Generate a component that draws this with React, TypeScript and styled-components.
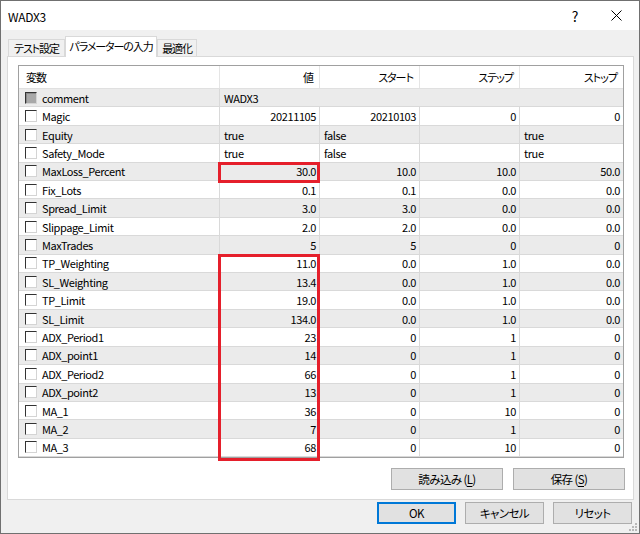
import React from "react";
import styled, { createGlobalStyle } from "styled-components";

const ROW_H = 18.42;
const HEAD_H = 23;

const Global = createGlobalStyle`
  html, body { margin: 0; padding: 0; background: #ffffff; }
  body {
    font-family: "Noto Sans CJK JP", "Noto Sans", sans-serif;
    font-size: 11px;
    letter-spacing: -0.4px;
    color: #000;
    font-feature-settings: "palt";
  }
  * { box-sizing: border-box; }
`;

const Window = styled.div`
  position: relative;
  width: 640px;
  height: 534px;
  border: 1px solid #707070;
  display: flex;
  flex-direction: column;
  background: #f0f0f0;
  overflow: hidden;
`;

const TitleBar = styled.div`
  height: 29px;
  background: #ffffff;
  display: flex;
  align-items: center;
  padding-left: 7px;
`;

const Title = styled.div`
  flex: 1;
  font-size: 12px;
  letter-spacing: -0.3px;
  padding-top: 1px;
`;

const CapButton = styled.div<{ $w: number }>`
  width: ${(p) => p.$w}px;
  height: 29px;
  display: flex;
  align-items: center;
  justify-content: center;
  font-size: 14px;
  letter-spacing: 0;
  color: #000;
`;

const Body = styled.div`
  flex: 1;
  display: flex;
  flex-direction: column;
  padding: 6px 5px 0 6px;
`;

const TabStrip = styled.div`
  display: flex;
  align-items: flex-end;
  height: 21px;
  margin-bottom: -1px;
  padding-left: 1px;
  position: relative;
  z-index: 1;
`;

const Tab = styled.div<{ $active?: boolean; $w: number }>`
  width: ${(p) => p.$w}px;
  height: ${(p) => (p.$active ? 21 : 18)}px;
  border: 1px solid #d9d9d9;
  border-bottom: ${(p) => (p.$active ? "none" : "1px solid #d9d9d9")};
  background: ${(p) => (p.$active ? "#ffffff" : "#f0f0f0")};
  display: flex;
  align-items: ${(p) => (p.$active ? "flex-start" : "center")};
  padding-top: ${(p) => (p.$active ? "1px" : "0")};
  justify-content: center;
  font-size: 11px;
  letter-spacing: -1.1px;
  white-space: nowrap;
`;

const Panel = styled.div`
  height: 444px;
  background: #ffffff;
  border: 1px solid #d9d9d9;
  padding: 8px 9px 0 10px;
  display: flex;
  flex-direction: column;
`;

const Table = styled.div`
  position: relative;
  border: 1px solid #a0a0a0;
  background: #ffffff;
`;

const Cols = "201px 100px 100px 100px 1fr";

const HeaderRow = styled.div`
  display: grid;
  grid-template-columns: ${Cols};
  height: ${HEAD_H}px;
  border-bottom: 1px solid #e0e0e0;
`;

const HeadCell = styled.div<{ $left?: boolean; $last?: boolean }>`
  display: flex;
  align-items: center;
  justify-content: ${(p) => (p.$left ? "flex-start" : "flex-end")};
  padding: ${(p) => (p.$left ? "0 0 0 7px" : "0 6px 0 0")};
  border-right: ${(p) => (p.$last ? "none" : "1px solid #e5e5e5")};
  letter-spacing: -1px;
  white-space: nowrap;
`;

const Row = styled.div<{ $alt: boolean }>`
  display: grid;
  grid-template-columns: ${Cols};
  height: ${ROW_H}px;
  background: ${(p) => (p.$alt ? "#ebebeb" : "#ffffff")};
  border-bottom: 1px solid #d9d9d9;
  &:last-child { border-bottom: none; }
`;

const Cell = styled.div<{ $right?: boolean; $last?: boolean; $span?: number }>`
  display: flex;
  align-items: center;
  justify-content: ${(p) => (p.$right ? "flex-end" : "flex-start")};
  padding: ${(p) => (p.$right ? "0 3px 0 0" : "0 0 0 4px")};
  border-right: ${(p) => (p.$last ? "none" : "1px solid #d9d9d9")};
  grid-column: ${(p) => (p.$span ? `span ${p.$span}` : "auto")};
  white-space: nowrap;
  overflow: hidden;
`;

const NameCell = styled.div`
  display: flex;
  align-items: center;
  gap: 5px;
  padding-left: 6px;
  border-right: 1px solid #d9d9d9;
  white-space: nowrap;
`;

const Check = styled.span<{ $disabled?: boolean }>`
  width: 12px;
  height: 12px;
  flex: none;
  border-top: 1px solid #333333;
  border-left: 1px solid #333333;
  border-right: 1px solid #d4d4d4;
  border-bottom: 1px solid #d4d4d4;
  background: ${(p) => (p.$disabled ? "#a8a8a8" : "#ffffff")};
  box-shadow: ${(p) => (p.$disabled ? "inset 1px 1px 0 #8a8a8a" : "none")};
`;

const Mark = styled.div`
  position: absolute;
  border: 3px solid #e51f2b;
  pointer-events: none;
`;

const ButtonRow = styled.div<{ $gap: number }>`
  display: flex;
  justify-content: flex-end;
  gap: ${(p) => p.$gap}px;
`;

const PanelButtons = styled(ButtonRow)`
  margin-top: 10px;
  margin-right: -1px;
`;

const FooterButtons = styled(ButtonRow)`
  margin-top: 2px;
  padding-right: 2px;
`;

const Button = styled.div<{ $w: number; $default?: boolean }>`
  width: ${(p) => p.$w}px;
  height: 22px;
  background: #e1e1e1;
  border: 1px solid ${(p) => (p.$default ? "#0078d7" : "#adadad")};
  box-shadow: ${(p) => (p.$default ? "inset 0 0 0 1px #0078d7" : "none")};
  display: flex;
  align-items: center;
  justify-content: center;
  font-size: 11.5px;
  letter-spacing: -0.6px;
  white-space: nowrap;
  u { text-decoration: underline; text-underline-offset: 2px; }
`;

const Grip = styled.svg`
  position: absolute;
  right: 1px;
  bottom: 1px;
`;

type R = { name: string; v: string[]; text?: boolean; comment?: boolean };

const rows: R[] = [
  { name: "comment", v: ["WADX3"], comment: true },
  { name: "Magic", v: ["20211105", "20210103", "0", "0"] },
  { name: "Equity", v: ["true", "false", "", "true"], text: true },
  { name: "Safety_Mode", v: ["true", "false", "", "true"], text: true },
  { name: "MaxLoss_Percent", v: ["30.0", "10.0", "10.0", "50.0"] },
  { name: "Fix_Lots", v: ["0.1", "0.1", "0.0", "0.0"] },
  { name: "Spread_Limit", v: ["3.0", "3.0", "0.0", "0.0"] },
  { name: "Slippage_Limit", v: ["2.0", "2.0", "0.0", "0.0"] },
  { name: "MaxTrades", v: ["5", "5", "0", "0"] },
  { name: "TP_Weighting", v: ["11.0", "0.0", "1.0", "0.0"] },
  { name: "SL_Weighting", v: ["13.4", "0.0", "1.0", "0.0"] },
  { name: "TP_Limit", v: ["19.0", "0.0", "1.0", "0.0"] },
  { name: "SL_Limit", v: ["134.0", "0.0", "1.0", "0.0"] },
  { name: "ADX_Period1", v: ["23", "0", "1", "0"] },
  { name: "ADX_point1", v: ["14", "0", "1", "0"] },
  { name: "ADX_Period2", v: ["66", "0", "1", "0"] },
  { name: "ADX_point2", v: ["13", "0", "1", "0"] },
  { name: "MA_1", v: ["36", "0", "10", "0"] },
  { name: "MA_2", v: ["7", "0", "1", "0"] },
  { name: "MA_3", v: ["68", "0", "10", "0"] },
];

const markStyle = (from: number, to: number, extraBottom: number) => {
  const top = HEAD_H + 1 + from * ROW_H - 2;
  const bottom = HEAD_H + 1 + (to + 1) * ROW_H + extraBottom;
  return { left: 199, width: 102, top, height: bottom - top };
};

export default function App() {
  return (
    <>
      <Global />
      <Window>
        <TitleBar>
          <Title>WADX3</Title>
          <CapButton $w={36}>?</CapButton>
          <CapButton $w={46}>
            <svg width="11" height="11" viewBox="0 0 11 11">
              <path d="M0.5 0.5 L10.5 10.5 M10.5 0.5 L0.5 10.5" stroke="#000" strokeWidth="1" fill="none" />
            </svg>
          </CapButton>
        </TitleBar>
        <Body>
          <TabStrip>
            <Tab $w={57}>テスト設定</Tab>
            <Tab $w={92} $active>パラメーターの入力</Tab>
            <Tab $w={40}>最適化</Tab>
          </TabStrip>
          <Panel>
            <Table>
              <HeaderRow>
                <HeadCell $left>変数</HeadCell>
                <HeadCell>値</HeadCell>
                <HeadCell>スタート</HeadCell>
                <HeadCell>ステップ</HeadCell>
                <HeadCell $last>ストップ</HeadCell>
              </HeaderRow>
              {rows.map((r, i) => (
                <Row key={r.name} $alt={i % 2 === 0}>
                  <NameCell>
                    <Check $disabled={r.comment} />
                    {r.name}
                  </NameCell>
                  {r.comment ? (
                    <Cell $span={4} $last>
                      {r.v[0]}
                    </Cell>
                  ) : (
                    r.v.map((v, j) => (
                      <Cell key={j} $right={!r.text} $last={j === 3}>
                        {v}
                      </Cell>
                    ))
                  )}
                </Row>
              ))}
              <Mark style={markStyle(4, 4, 1)} />
              <Mark style={markStyle(9, 19, 3)} />
            </Table>
            <PanelButtons $gap={10}>
              <Button $w={112}>
                読み込み&nbsp;(<u>L</u>)
              </Button>
              <Button $w={112}>
                保存&nbsp;(<u>S</u>)
              </Button>
            </PanelButtons>
          </Panel>
          <FooterButtons $gap={9}>
            <Button $w={79} $default>
              OK
            </Button>
            <Button $w={79}>キャンセル</Button>
            <Button $w={79}>リセット</Button>
          </FooterButtons>
        </Body>
        <Grip width="10" height="10" viewBox="0 0 10 10">
          {[
            [8, 2],
            [8, 5],
            [5, 5],
            [8, 8],
            [5, 8],
            [2, 8],
          ].map(([x, y], k) => (
            <rect key={k} x={x - 1} y={y - 1} width="2" height="2" fill="#b8b8b8" />
          ))}
        </Grip>
      </Window>
    </>
  );
}
